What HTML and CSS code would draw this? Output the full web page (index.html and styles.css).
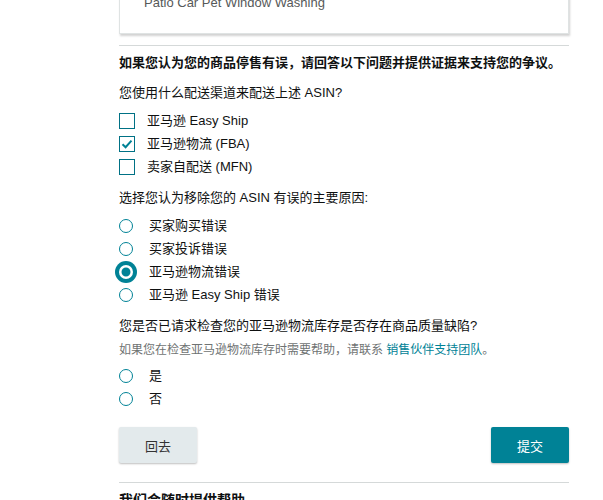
FILE: index.html
```html
<!DOCTYPE html>
<html lang="zh-CN">

<head>
    <meta charset="UTF-8">
    <meta name="viewport" content="width=device-width, initial-scale=1.0">
    <title>申诉 - 商品停售</title>
    <link rel="stylesheet" href="styles.css">
</head>

<body>
    <div class="page">
        <div class="card">
            <div class="card-title">Patio Car Pet Window Washing</div>
        </div>

        <div class="divider"></div>

        <div class="intro">如果您认为您的商品停售有误，请回答以下问题并提供证据来支持您的争议。</div>

        <div class="question q-first">您使用什么配送渠道来配送上述 ASIN?</div>
        <div class="options">
            <label class="option">
                <span class="check"></span>
                <span class="option-text">亚马逊 Easy Ship</span>
            </label>
            <label class="option">
                <span class="check checked">
                    <svg width="12" height="10" viewBox="0 0 12 10">
                        <path d="M1.5 5.2 L4.6 8.2 L10.5 1.6" fill="none" stroke="#008296" stroke-width="2" />
                    </svg>
                </span>
                <span class="option-text">亚马逊物流 (FBA)</span>
            </label>
            <label class="option">
                <span class="check"></span>
                <span class="option-text">卖家自配送 (MFN)</span>
            </label>
        </div>

        <div class="question">选择您认为移除您的 ASIN 有误的主要原因:</div>
        <div class="options">
            <label class="option radio-row">
                <span class="radio"></span>
                <span class="option-text">买家购买错误</span>
            </label>
            <label class="option radio-row">
                <span class="radio"></span>
                <span class="option-text">买家投诉错误</span>
            </label>
            <label class="option radio-row">
                <span class="radio selected"></span>
                <span class="option-text">亚马逊物流错误</span>
            </label>
            <label class="option radio-row">
                <span class="radio"></span>
                <span class="option-text">亚马逊 Easy Ship 错误</span>
            </label>
        </div>

        <div class="question">您是否已请求检查您的亚马逊物流库存是否存在商品质量缺陷?</div>
        <div class="help">如果您在检查亚马逊物流库存时需要帮助，请联系 <a href="#">销售伙伴支持团队</a>。</div>
        <div class="options options-tight">
            <label class="option radio-row">
                <span class="radio"></span>
                <span class="option-text">是</span>
            </label>
            <label class="option radio-row">
                <span class="radio"></span>
                <span class="option-text">否</span>
            </label>
        </div>

        <div class="actions">
            <button class="btn btn-back">回去</button>
            <button class="btn btn-submit">提交</button>
        </div>

        <div class="divider divider-bottom"></div>

        <div class="help-title">我们会随时提供帮助</div>
    </div>
</body>

</html>
```

FILE: styles.css
```css
body {
    margin: 0;
    padding: 0;
    background: #fff;
    color: #0f1111;
    font-family: "Liberation Sans", "Noto Sans CJK SC", sans-serif;
    font-size: 13px;
    line-height: 19px;
    overflow: hidden;
}

.page {
    width: 450px;
    margin-left: 119px;
}

.card {
    margin-top: -18px;
    padding: 10px 24px 20px;
    border: 1px solid #dfe3e3;
    background: #fff;
    box-shadow: 1px 2px 2px rgba(0, 0, 0, 0.18);
}

.card-title {
    color: #565959;
    line-height: 20px;
}

.divider {
    height: 1px;
    background: #d5d9d9;
    margin-top: 11px;
}

.intro {
    font-weight: bold;
    margin-top: 7px;
}

.question {
    margin-top: 10px;
}

.q-first {
    margin-top: 11px;
}

.options {
    margin-top: 7px;
}

.options-tight {
    margin-top: 5px;
}

.option {
    display: flex;
    align-items: center;
    height: 23px;
}

.check {
    width: 14px;
    height: 14px;
    border: 1px solid #007185;
    background: #fff;
    display: flex;
    align-items: center;
    justify-content: center;
    flex-shrink: 0;
}

.check + .option-text {
    margin-left: 12px;
}

.radio {
    width: 12px;
    height: 12px;
    border: 1px solid #008296;
    border-radius: 50%;
    background: #fff;
    flex-shrink: 0;
}

.radio.selected {
    width: 14px;
    height: 14px;
    border: 0;
    background: #008296;
    box-shadow: inset 0 0 0 2.5px #fff,
                0 0 0 4px #008296;
}

.radio + .option-text {
    margin-left: 16px;
}

.help {
    color: #6f7373;
    font-size: 12px;
    line-height: 18px;
    margin-top: 6px;
}

.help a {
    color: #008296;
    text-decoration: none;
}

.actions {
    display: flex;
    justify-content: space-between;
    margin-top: 17px;
}

.btn {
    width: 78px;
    height: 36px;
    border: 0;
    border-radius: 2px;
    font-family: inherit;
    font-size: 13px;
    cursor: pointer;
    box-shadow: 0 1px 2px rgba(0, 0, 0, 0.25);
}

.btn-back {
    background: #e3eaec;
    color: #333;
}

.btn-submit {
    background: #008296;
    color: #fff;
}

.divider-bottom {
    margin-top: 19px;
}

.help-title {
    font-weight: bold;
    font-size: 14px;
    margin-top: 8px;
}
```
